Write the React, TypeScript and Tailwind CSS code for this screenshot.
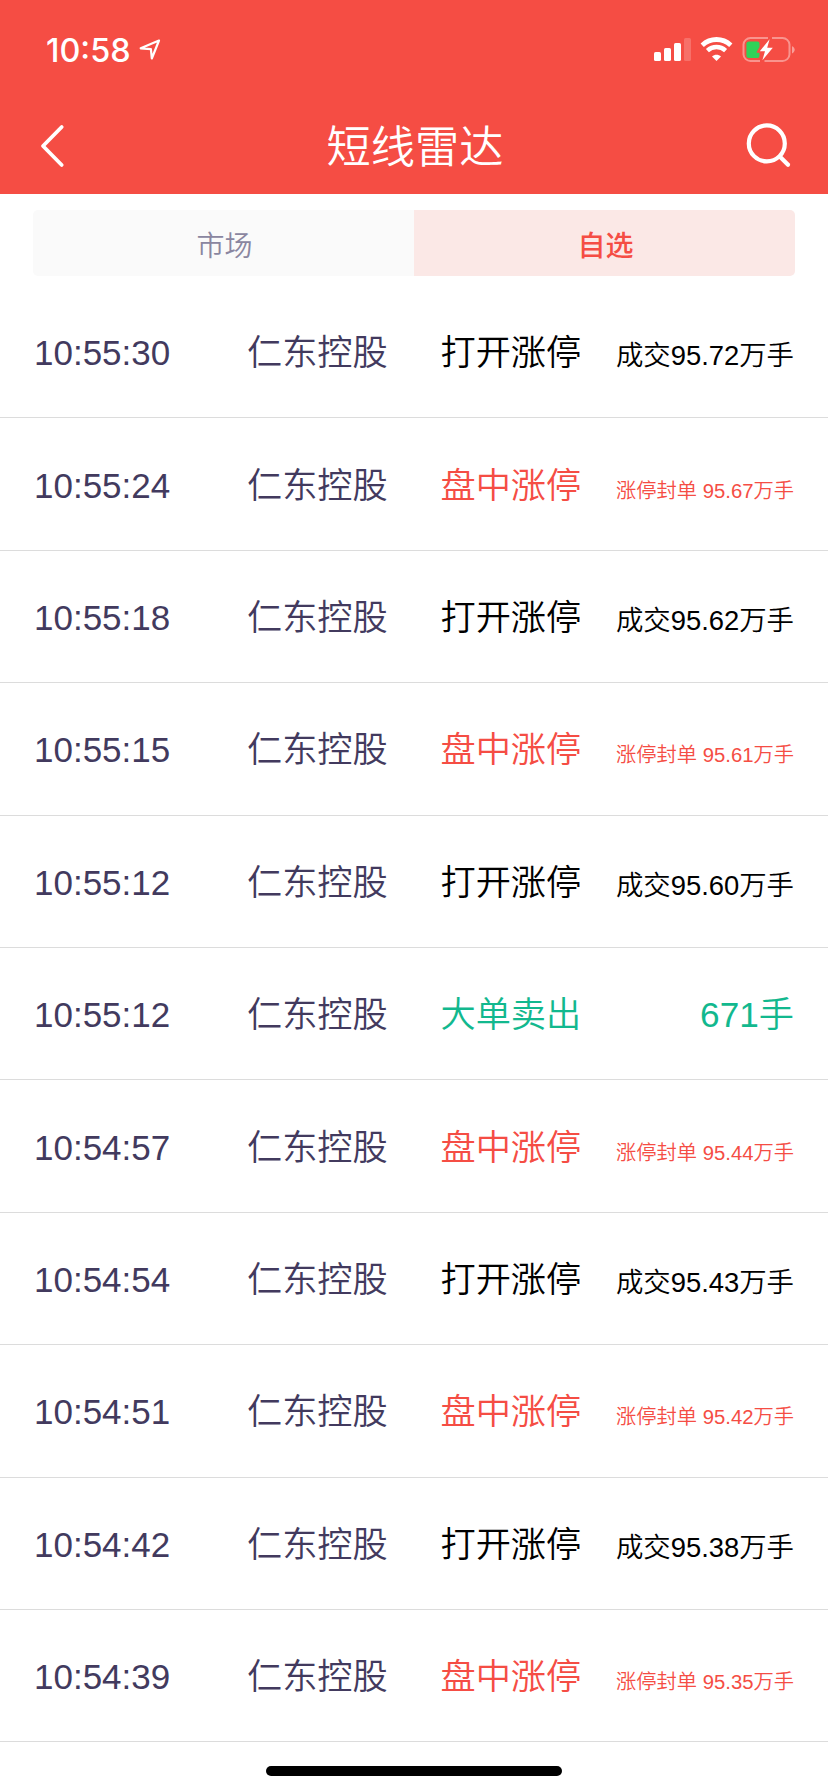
import React, { useState } from 'react';
import clsx from 'clsx';

type RadarKind = 'open' | 'limit' | 'sell';

interface RadarItem {
  time: string;
  name: string;
  kind: RadarKind;
  amount: string;
}

const items: RadarItem[] = [
  { time: '10:55:30', name: '仁东控股', kind: 'open', amount: '成交95.72万手' },
  { time: '10:55:24', name: '仁东控股', kind: 'limit', amount: '涨停封单 95.67万手' },
  { time: '10:55:18', name: '仁东控股', kind: 'open', amount: '成交95.62万手' },
  { time: '10:55:15', name: '仁东控股', kind: 'limit', amount: '涨停封单 95.61万手' },
  { time: '10:55:12', name: '仁东控股', kind: 'open', amount: '成交95.60万手' },
  { time: '10:55:12', name: '仁东控股', kind: 'sell', amount: '671手' },
  { time: '10:54:57', name: '仁东控股', kind: 'limit', amount: '涨停封单 95.44万手' },
  { time: '10:54:54', name: '仁东控股', kind: 'open', amount: '成交95.43万手' },
  { time: '10:54:51', name: '仁东控股', kind: 'limit', amount: '涨停封单 95.42万手' },
  { time: '10:54:42', name: '仁东控股', kind: 'open', amount: '成交95.38万手' },
  { time: '10:54:39', name: '仁东控股', kind: 'limit', amount: '涨停封单 95.35万手' },
];

// label, color and amount size for each kind of event
const kinds = {
  open: { label: '打开涨停', color: 'text-black', size: 'text-[27.4px]' },
  limit: { label: '盘中涨停', color: 'text-[#f54d44]', size: 'text-[20.3px]' },
  sell: { label: '大单卖出', color: 'text-[#12b88e]', size: 'text-[35.2px]' },
};

const tabs = ['市场', '自选'];

const StatusBar = () => (
  <div className="flex h-[98px] items-center justify-between pt-0.5 pl-[46px] pr-[33px]">
    <div className="flex items-center">
      <span className="pt-0.5 font-['Inter',sans-serif] text-[32.4px] leading-none font-medium">10:58</span>
      <svg className="ml-2" width="22" height="22" viewBox="0 0 22 22" fill="none">
        <path
          d="M20 1.5L1.7 9.3L11.9 10.2L12.8 19.5Z"
          stroke="white"
          strokeWidth="2.2"
          strokeLinejoin="round"
        />
      </svg>
    </div>
    <div className="flex items-center">
      <svg width="37" height="26" viewBox="0 0 37 26" fill="white">
        <rect x="0" y="15" width="7" height="9" rx="1.6" />
        <rect x="10" y="11" width="7" height="13" rx="1.6" />
        <rect x="20" y="6" width="7" height="18" rx="1.6" />
        <rect x="30" y="1" width="7" height="23" rx="1.6" fillOpacity="0.2" />
      </svg>
      <svg className="ml-[9px]" width="33" height="26" viewBox="0 0 33 26" fill="none">
        <path d="M2.2 8.2C10.5 0.6 22.5 0.6 30.8 8.2" stroke="white" strokeWidth="4.8" />
        <path d="M7.4 13.6C12.6 8.8 20.4 8.8 25.6 13.6" stroke="white" strokeWidth="4.4" />
        <path d="M16.5 24L12 19.4C14.6 17.1 18.4 17.1 21 19.4Z" fill="white" />
      </svg>
      <svg className="ml-[9px]" width="53" height="26" viewBox="0 0 53 26" fill="none">
        <path
          d="M26 1H8.5A7 7 0 0 0 1.5 7.5V17.5A7 7 0 0 0 8.5 24H18M22.5 24H40.5A7 7 0 0 0 47.5 17.5V7.5A7 7 0 0 0 40.5 1H30"
          stroke="white"
          strokeOpacity="0.4"
          strokeWidth="2"
        />
        <path d="M50 9.2C53.6 10.4 53.6 14.8 50 16.4Z" fill="white" fillOpacity="0.45" />
        <path d="M7 4.4H15.5Q17.5 4.4 17.5 6.4V10L14.4 15.6L17.5 16V19Q17.5 21 15.5 21H7Q4.4 21 4.4 18.5V7Q4.4 4.4 7 4.4Z" fill="#30d158" />
        <path d="M27.6 2.2L17.8 14.2H23L20.4 23.2L30.8 10.8H25.2Z" fill="white" />
      </svg>
    </div>
  </div>
);

const NavBar = () => (
  <div className="flex h-24 items-center justify-between pr-[36px] pl-[39px]">
    <button className="w-[45px]" aria-label="返回">
      <svg width="26" height="44" viewBox="0 0 26 44" fill="none">
        <path d="M22.7 3L4 22L22.7 41" stroke="white" strokeWidth="3.8" strokeLinecap="round" strokeLinejoin="round" />
      </svg>
    </button>
    <h1 className="pt-[5px] text-[44.2px] leading-none font-[350]">短线雷达</h1>
    <button aria-label="搜索">
      <svg width="46" height="46" viewBox="0 0 46 46" fill="none">
        <circle cx="20.8" cy="20.4" r="18" stroke="white" strokeWidth="4.2" />
        <path d="M34.5 34.2L42 41.7" stroke="white" strokeWidth="4.2" strokeLinecap="round" />
      </svg>
    </button>
  </div>
);

const RadarRow = ({ item }: { item: RadarItem }) => {
  const kind = kinds[item.kind];

  return (
    <li className="flex h-[132.4px] items-center border-b border-[#dcdcdc] px-[34px]">
      <div className="mt-[3px] flex h-[52px] w-full items-baseline leading-[52px] font-[350] whitespace-nowrap">
        <span className="w-[213px] text-[35px] text-[#423a5e]">{item.time}</span>
        <span className="w-[193.5px] text-[35.2px] text-[#423a5e]">{item.name}</span>
        <span className={clsx('text-[35.2px]', kind.color)}>{kind.label}</span>
        <span className={clsx('ml-auto', kind.size, kind.color)}>{item.amount}</span>
      </div>
    </li>
  );
};

export default function App() {
  const [activeTab, setActiveTab] = useState('自选');

  return (
    <div className="flex h-[1792px] w-[828px] flex-col overflow-hidden bg-white font-['Liberation_Sans','Noto_Sans_CJK_SC',sans-serif]">
      <header className="h-[194px] shrink-0 bg-[#f54d44] text-white">
        <StatusBar />
        <NavBar />
      </header>

      <div className="mx-[33px] mt-4 flex h-[66px] shrink-0 overflow-hidden rounded-[5px]">
        {tabs.map((tab) => (
          <button
            key={tab}
            onClick={() => setActiveTab(tab)}
            className={clsx(
              'flex-1 pt-2 pl-0.5 text-[28px]',
              tab === activeTab ? 'bg-[#fbe8e6] font-medium text-[#f54d44]' : 'bg-[#fafafa] font-[350] text-[#8a86a0]'
            )}
          >
            {tab}
          </button>
        ))}
      </div>

      <ul className="mt-[10px]">
        {items.map((item, index) => (
          <RadarRow key={index} item={item} />
        ))}
      </ul>

      {/* Home indicator */}
      <div className="mx-auto mt-auto mb-4 h-[10px] w-[296px] shrink-0 rounded-full bg-black" />
    </div>
  );
}
